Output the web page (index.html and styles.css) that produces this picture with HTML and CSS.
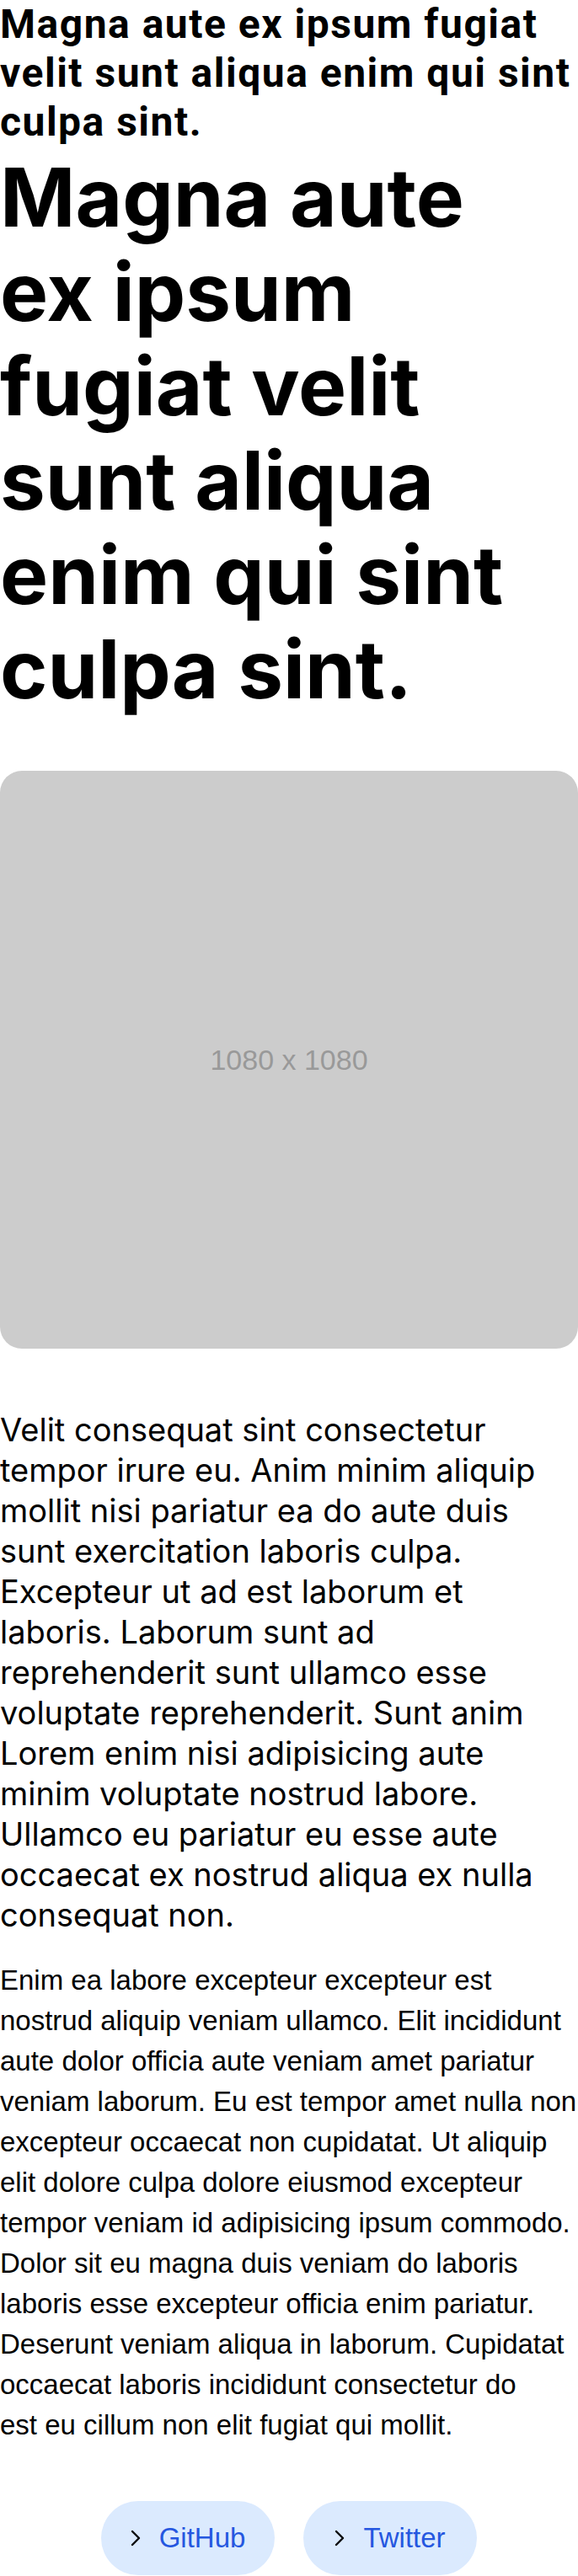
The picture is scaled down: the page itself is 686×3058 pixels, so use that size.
FILE: index.html
```html
<!DOCTYPE html>
<html lang="en">
<head>
<meta charset="utf-8">
<title>Magna aute</title>
<link rel="stylesheet" href="styles.css">
</head>
<body>
<main class="page">
  <h1 class="title-small">Magna aute ex ipsum fugiat velit sunt aliqua enim qui sint culpa sint.</h1>
  <h2 class="title-large">Magna aute ex ipsum fugiat velit sunt aliqua enim qui sint culpa sint.</h2>
  <div class="placeholder"><span class="placeholder-text">1080 x 1080</span></div>
  <p class="lead">Velit consequat sint consectetur tempor irure eu. Anim minim aliquip mollit nisi pariatur ea do aute duis sunt exercitation laboris culpa. Excepteur ut ad est laborum et laboris. Laborum sunt ad reprehenderit sunt ullamco esse voluptate reprehenderit. Sunt anim Lorem enim nisi adipisicing aute minim voluptate nostrud labore. Ullamco eu pariatur eu esse aute occaecat ex nostrud aliqua ex nulla consequat non.</p>
  <p class="body">Enim ea labore excepteur excepteur est nostrud aliquip veniam ullamco. Elit incididunt aute dolor officia aute veniam amet pariatur veniam laborum. Eu est tempor amet nulla non excepteur occaecat non cupidatat. Ut aliquip elit dolore culpa dolore eiusmod excepteur tempor veniam id adipisicing ipsum commodo. Dolor sit eu magna duis veniam do laboris laboris esse excepteur officia enim pariatur. Deserunt veniam aliqua in laborum. Cupidatat occaecat laboris incididunt consectetur do<br>est eu cillum non elit fugiat qui mollit.</p>
  <nav class="links">
    <a class="link-btn" href="#">
      <svg class="chev" viewBox="0 0 12 20" width="12" height="20"><polyline points="2,2 10,10 2,18" fill="none" stroke="#000" stroke-width="2.4" stroke-linecap="round" stroke-linejoin="round"/></svg>
      <span>GitHub</span>
    </a>
    <a class="link-btn" href="#">
      <svg class="chev" viewBox="0 0 12 20" width="12" height="20"><polyline points="2,2 10,10 2,18" fill="none" stroke="#000" stroke-width="2.4" stroke-linecap="round" stroke-linejoin="round"/></svg>
      <span>Twitter</span>
    </a>
  </nav>
</main>
</body>
</html>
```
FILE: styles.css
```css
html, body {
  margin: 0;
  padding: 0;
  background: #fff;
  color: #000;
}

.page {
  display: flex;
  flex-direction: column;
}

.title-small {
  margin: 0;
  font-family: Roboto, "Liberation Sans", sans-serif;
  font-weight: 700;
  font-size: 48px;
  line-height: 58px;
  letter-spacing: 1.5px;
}

.title-large {
  margin: 4px 0 0;
  max-width: 630px;
  font-family: Inter, "Noto Sans", sans-serif;
  font-weight: 700;
  font-size: 96px;
  line-height: 112px;
}

.placeholder {
  margin-top: 65px;
  width: 686px;
  height: 686px;
  border-radius: 26px;
  background: #cccccc;
  display: flex;
  align-items: center;
  justify-content: center;
}

.placeholder-text {
  font-family: "Liberation Sans", Arial, sans-serif;
  font-size: 34px;
  color: #999999;
}

.lead {
  margin: 72px 0 0;
  font-family: Inter, "Noto Sans", sans-serif;
  font-size: 38px;
  line-height: 48px;
}

.body {
  margin: 30px 0 0;
  font-family: "Liberation Sans", Arial, sans-serif;
  font-size: 33px;
  line-height: 48px;
}

.links {
  margin-top: 66px;
  display: flex;
  justify-content: center;
  gap: 34px;
}

.link-btn {
  width: 206px;
  height: 88px;
  box-sizing: border-box;
  border-radius: 44px;
  background: #dbeafe;
  display: flex;
  align-items: center;
  justify-content: center;
  gap: 22px;
  text-decoration: none;
  font-family: "Liberation Sans", Arial, sans-serif;
  font-size: 33px;
  color: #2557e0;
}

.chev {
  flex: none;
}
```
